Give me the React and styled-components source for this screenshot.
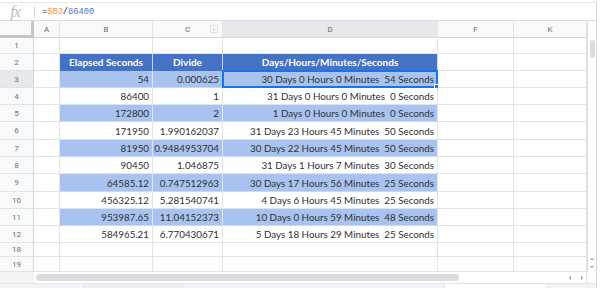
import React from "react";
import styled, { createGlobalStyle, css } from "styled-components";

const Global = createGlobalStyle`
  html, body { margin: 0; padding: 0; background: #ffffff; }
  body { font-family: "Liberation Sans", Arial, sans-serif; }
`;

const Page = styled.div`
  width: 597px;
  height: 288px;
  margin-top: 2px;
  box-sizing: border-box;
  border-top: 1px solid #e6e6e6;
  border-right: 1px solid #d6d6d6;
  display: flex;
  flex-direction: column;
  overflow: hidden;
`;

const FormulaBar = styled.div`
  height: 17px;
  flex: none;
  display: flex;
  align-items: center;
  border-bottom: 1px solid #dcdcdc;
`;

const Fx = styled.span`
  width: 34px;
  text-align: center;
  font-family: "Liberation Serif", "Times New Roman", serif;
  font-style: italic;
  font-size: 16px;
  line-height: 15px;
  color: #b9b9b9;
  letter-spacing: -1px;
  padding-right: 4px;
  box-sizing: border-box;
`;

const Divider = styled.span`
  width: 1px;
  height: 12px;
  background: #dadada;
`;

const Formula = styled.span`
  margin-left: 7px;
  font-family: "Liberation Mono", "Courier New", monospace;
  font-size: 8.7px;
  color: #222;
`;

const Tok = styled.span`
  color: ${(p) => p.$c};
`;

const Body = styled.div`
  display: flex;
  flex: none;
`;

const Grid = styled.div`
  display: grid;
  grid-template-columns: 34px 26px 93px 70px 215px 76px 73px;
  grid-template-rows: 17px 16px 17px 17px 17px 17px 18px 17px 17px 18px 17px 17px 17px 14px 15px;
`;

const Cell = styled.div`
  position: relative;
  box-sizing: border-box;
  border-right: 1px solid #e2e3e3;
  border-bottom: 1px solid #e2e3e3;
  display: flex;
  align-items: center;
  justify-content: flex-end;
  padding: 0 3px 0 0;
  white-space: pre;
  overflow: visible;
  font-family: Lato, "Liberation Sans", sans-serif;
  font-size: 9.8px;
  color: #303030;
  background: #ffffff;

  ${(p) =>
    p.$kind === "colhead" &&
    css`
      justify-content: center;
      padding: 0;
      font-family: Roboto, "Liberation Sans", sans-serif;
      font-size: 8px;
      color: #6b6b6b;
      background: ${p.$active ? "#e6e8eb" : "#f8f9fa"};
      border-bottom-color: #d6d6d6;
    `}
  ${(p) =>
    p.$kind === "rowhead" &&
    css`
      justify-content: center;
      padding: 0;
      font-family: Roboto, "Liberation Sans", sans-serif;
      font-size: 8px;
      color: #6e6e6e;
      background: ${p.$active ? "#e6e8eb" : "#f8f9fa"};
      border-right-color: #d6d6d6;
    `}
  ${(p) =>
    p.$kind === "corner" &&
    css`
      background: #f8f9fa;
      border-right: 3px solid #c6c6c6;
      border-bottom: 3px solid #c6c6c6;
    `}
  ${(p) =>
    p.$kind === "th" &&
    css`
      justify-content: center;
      padding: 0;
      background: #4472c4;
      color: #ffffff;
      font-size: 10px;
      font-weight: 700;
      border-right-color: #c9d5ec;
      border-bottom-color: #4472c4;
    `}
  ${(p) =>
    p.$kind === "band" &&
    css`
      background: #a9c3f0;
      border-right-color: #dfe7f7;
      border-bottom-color: #c9d8f3;
    `}
`;

const Selection = styled.span`
  position: absolute;
  left: -1px;
  top: -1px;
  right: -1px;
  bottom: -1px;
  border: 2px solid #1a73e8;
  pointer-events: none;
  &::after {
    content: "";
    position: absolute;
    right: -5px;
    bottom: -5px;
    width: 5px;
    height: 5px;
    background: #1a73e8;
    border: 1px solid #ffffff;
  }
`;

const FilterBtn = styled.span`
  position: absolute;
  right: 4px;
  top: 4px;
  width: 8px;
  height: 8px;
  box-sizing: border-box;
  border: 1px solid #e0e0e0;
  background: #fafafa;
  &::after {
    content: "";
    position: absolute;
    left: 1.5px;
    top: 2.5px;
    border-left: 1.5px solid transparent;
    border-right: 1.5px solid transparent;
    border-top: 2px solid #b0b0b0;
  }
`;

const VScroll = styled.div`
  width: 10px;
  box-sizing: border-box;
  border-left: 1px solid #dcdcdc;
  display: flex;
  flex-direction: column;
  align-items: center;
  padding-top: 19px;
  background: #ffffff;
`;

const VThumb = styled.div`
  width: 5px;
  height: 18px;
  border-radius: 3px;
  background: #dadce0;
`;

const VArrows = styled.div`
  margin-top: auto;
  display: flex;
  flex-direction: column;
  gap: 6px;
  padding-bottom: 4px;
`;

const Arrow = styled.span`
  width: 0;
  height: 0;
  border-left: 2px solid transparent;
  border-right: 2px solid transparent;
  ${(p) =>
    p.$dir === "up"
      ? css`border-bottom: 2px solid #9a9a9a;`
      : css`border-top: 2px solid #9a9a9a;`}
`;

const HArrow = styled.span`
  width: 0;
  height: 0;
  border-top: 2px solid transparent;
  border-bottom: 2px solid transparent;
  ${(p) =>
    p.$dir === "left"
      ? css`border-right: 2px solid #9a9a9a;`
      : css`border-left: 2px solid #9a9a9a;`}
`;

const HScrollRow = styled.div`
  height: 11px;
  flex: none;
  display: flex;
  border-bottom: 1px solid #e4e4e4;
`;

const HCorner = styled.div`
  width: ${(p) => p.$w}px;
  background: ${(p) => p.$bg};
  flex: none;
`;

const HTrack = styled.div`
  flex: 1;
  display: flex;
  align-items: center;
  padding-left: 2px;
  border-right: 1px solid #e2e2e2;
`;

const HThumb = styled.div`
  width: 423px;
  height: 7px;
  border-radius: 4px;
  background: #dadce0;
`;

const HArrows = styled.div`
  margin-left: auto;
  display: flex;
  align-items: center;
  gap: 10px;
  padding-right: 3px;
`;

const TabBar = styled.div`
  flex: 1;
  display: flex;
  background: #f1f3f4;
`;

const Tab = styled.div`
  width: ${(p) => p.$w}px;
  margin-left: ${(p) => p.$ml}px;
  background: ${(p) => p.$bg};
  border-left: 1px solid #e3e3e3;
`;

const cols = ["A", "B", "C", "D", "F", "K"];

const rows = [
  ["54", "0.000625", "30 Days 0 Hours 0 Minutes  54 Seconds"],
  ["86400", "1", "31 Days 0 Hours 0 Minutes  0 Seconds"],
  ["172800", "2", "1 Days 0 Hours 0 Minutes  0 Seconds"],
  ["171950", "1.990162037", "31 Days 23 Hours 45 Minutes  50 Seconds"],
  ["81950", "0.9484953704", "30 Days 22 Hours 45 Minutes  50 Seconds"],
  ["90450", "1.046875", "31 Days 1 Hours 7 Minutes  30 Seconds"],
  ["64585.12", "0.747512963", "30 Days 17 Hours 56 Minutes  25 Seconds"],
  ["456325.12", "5.281540741", "4 Days 6 Hours 45 Minutes  25 Seconds"],
  ["953987.65", "11.04152373", "10 Days 0 Hours 59 Minutes  48 Seconds"],
  ["584965.21", "6.770430671", "5 Days 18 Hours 29 Minutes  25 Seconds"],
];

export default function App() {
  return (
    <>
      <Global />
      <Page>
        <FormulaBar>
          <Fx>fx</Fx>
          <Divider />
          <Formula>
            =<Tok $c="#f29b38">$B3</Tok>/<Tok $c="#4a76c9">86400</Tok>
          </Formula>
        </FormulaBar>
        <Body>
          <Grid>
            <Cell $kind="corner" />
            {cols.map((c) => (
              <Cell key={c} $kind="colhead" $active={c === "D"}>
                {c}
                {c === "C" && <FilterBtn />}
              </Cell>
            ))}

            <Cell $kind="rowhead">1</Cell>
            {cols.map((c) => (
              <Cell key={"r1" + c} />
            ))}

            <Cell $kind="rowhead">2</Cell>
            <Cell />
            <Cell $kind="th">Elapsed Seconds</Cell>
            <Cell $kind="th">Divide</Cell>
            <Cell $kind="th">Days/Hours/Minutes/Seconds</Cell>
            <Cell />
            <Cell />

            {rows.map((r, i) => {
              const n = i + 3;
              const band = i % 2 === 0 ? "band" : undefined;
              return (
                <React.Fragment key={n}>
                  <Cell $kind="rowhead" $active={n === 3}>
                    {n}
                  </Cell>
                  <Cell />
                  <Cell $kind={band}>{r[0]}</Cell>
                  <Cell $kind={band}>{r[1]}</Cell>
                  <Cell $kind={band}>
                    {r[2]}
                    {n === 3 && <Selection />}
                  </Cell>
                  <Cell />
                  <Cell />
                </React.Fragment>
              );
            })}

            {[18, 19].map((n) => (
              <React.Fragment key={n}>
                <Cell $kind="rowhead">{n}</Cell>
                {cols.map((c) => (
                  <Cell key={n + c} />
                ))}
              </React.Fragment>
            ))}
          </Grid>
          <VScroll>
            <VThumb />
            <VArrows>
              <Arrow $dir="up" />
              <Arrow $dir="down" />
            </VArrows>
          </VScroll>
        </Body>
        <HScrollRow>
          <HCorner $w={34} $bg="#f1f3f4" />
          <HTrack>
            <HThumb />
            <HArrows>
              <HArrow $dir="left" />
              <HArrow $dir="right" />
            </HArrows>
          </HTrack>
          <HCorner $w={9} $bg="#ffffff" />
        </HScrollRow>
        <TabBar>
          <Tab $w={100} $ml={83} $bg="#eceef0" />
          <Tab $w={100} $ml={260} $bg="#ffffff" />
        </TabBar>
      </Page>
    </>
  );
}
